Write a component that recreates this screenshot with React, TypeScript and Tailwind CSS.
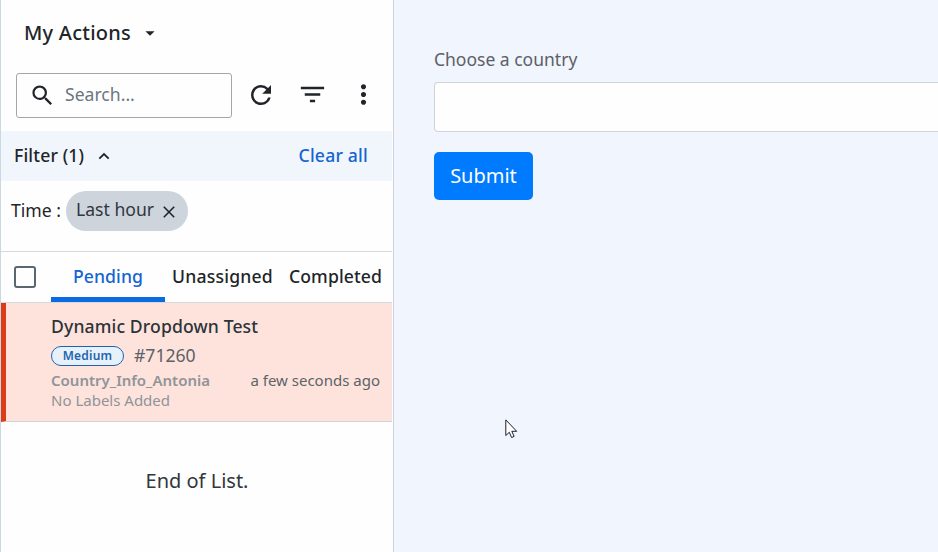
import React from "react";
import { MdSearch, MdRefresh, MdFilterList, MdMoreVert, MdArrowDropDown } from "react-icons/md";

function Sidebar() {
  return (
    <aside className="flex h-full w-[394px] shrink-0 flex-col border-l border-r border-l-[#cbd8e2] border-r-[#cdd3dc] bg-[#fefefe] text-[#212529]">
      <header className="flex h-[66px] items-center pl-[23px]">
        <h1 className="text-[20px] font-medium tracking-[0.25px]">My Actions</h1>
        <MdArrowDropDown className="ml-[8px] size-[22px]" />
      </header>

      <div className="mt-[7px] flex h-[45px] items-center pl-[15px]">
        <label className="flex h-[45px] w-[216px] items-center rounded-[3px] border border-[#a3a7ad] pb-px pl-[12px]">
          <MdSearch className="size-[27px]" />
          <span className="-mt-px ml-[9px] text-[17.6px] text-[#6c757d]">Search...</span>
        </label>
        <MdRefresh className="-mt-[2px] ml-[14px] size-[30px]" />
        <MdFilterList className="-mt-[2px] ml-[21px] size-[31px]" />
        <MdMoreVert className="-mt-[2px] ml-[20px] size-[31px]" />
      </div>

      <div className="mr-px mt-[13px] flex h-[50px] items-center bg-[#f1f5fc] pb-[2px] pl-[13px] pr-[24px] text-[17.6px] font-medium">
        <span className="tracking-[0.15px]">Filter (1)</span>
        <svg className="ml-[14px] mt-[2px] h-[8px] w-[12px]" viewBox="0 0 12 8" fill="none" stroke="#212529" strokeWidth="1.8">
          <path d="M1.3 6.7 6 2l4.700 4.700" />
        </svg>
        <button className="ml-auto tracking-[0.2px] text-[#1464d2]">Clear all</button>
      </div>

      <div className="mr-px flex h-[71px] items-start border-b border-[#d5d8dd] pl-[10px] pt-[10px] text-[17.6px]">
        <span className="leading-[38px]">Time :</span>
        <span className="ml-[5px] flex h-[40px] w-[122px] items-center rounded-full bg-[#ced4dc] pl-[10px] text-[#31363f]">
          <span className="-mt-[4px]">Last hour</span>
          <svg className="ml-[9px] mt-[2px] size-[12px]" viewBox="0 0 12 12" fill="none" stroke="#212529" strokeWidth="1.6">
            <path d="M.8.8 11.200 11.200M11.200.8.8 11.200" />
          </svg>
        </span>
      </div>

      <nav className="mr-px flex h-[51px] items-stretch border-b border-[#d5d8dd] text-[17.6px] font-medium tracking-[0.1px]">
        <span className="ml-[13px] mt-[14px] size-[22px] rounded-[3px] border-2 border-[#5b6770]" />
        <span className="ml-[15px] w-[114px] border-b-[5px] border-[#0a6ae0] text-center leading-[48px] text-[#1464d2]">Pending</span>
        <span className="ml-[7px] w-[100px] whitespace-nowrap leading-[48px] tracking-[0.2px]">Unassigned</span>
        <span className="ml-[17px] whitespace-nowrap leading-[48px]">Completed</span>
      </nav>

      <article className="mr-px flex h-[119px] flex-col border-b border-l-[5px] border-b-[#d5d2d5] border-l-[#dc3a18] bg-[#fee3dd] pl-[45px] pr-[12px] pt-[11px]">
        <h2 className="text-[17.6px] font-medium leading-[24px] tracking-[0.12px] text-[#2d3338]">Dynamic Dropdown Test</h2>
        <div className="mt-[6px] flex h-[24px] items-center">
          <span className="flex h-[20px] w-[73px] items-center justify-center rounded-full border border-[#1c65ae] bg-[#e7f1fc] text-[12px] font-semibold tracking-[0.2px] text-[#1f65ad]">Medium</span>
          <span className="-mt-[2px] ml-[10px] text-[17.6px] text-[#5c6166]">#71260</span>
        </div>
        <div className="mt-[2px] flex items-center justify-between leading-[20px]">
          <span className="text-[15px] font-semibold text-[#8f9498]">Country_Info_Antonia</span>
          <span className="text-[15px] text-[#5c6368]">a few seconds ago</span>
        </div>
        <span className="text-[15px] leading-[20px] text-[#8f9498]">No Labels Added</span>
      </article>

      <p className="mt-[44px] text-center text-[20px] leading-[30px] text-[#33373c]">End of List.</p>
    </aside>
  );
}

function CountryForm() {
  return (
    <main className="flex min-w-0 flex-1 flex-col pl-[40px] pt-[47px]">
      <span className="text-[17.5px] leading-[24px] text-[#5b6066]">Choose a country</span>
      <div className="mt-[11px] h-[50px] rounded-l-[4px] border border-r-0 border-[#ced4da] bg-[#fefefe]" />
      <button className="mt-[20px] h-[48px] w-[99px] rounded-[5px] bg-[#007bff] text-[20px] text-white">Submit</button>
    </main>
  );
}

export default function App() {
  return (
    <div className="relative flex h-[552px] w-[938px] overflow-hidden bg-[#f1f5fd] font-['Noto_Sans',sans-serif]">
      <Sidebar />
      <CountryForm />
      <svg className="absolute left-[505px] top-[419px] h-[20px] w-[13px]" viewBox="0 0 13 20">
        <path d="M.8.900v15.600l3.500-3.200 2.300 5.200 2.500-1.100-2.300-5.100h4.900z" fill="#fff" stroke="#1b2027" strokeWidth="1" />
      </svg>
    </div>
  );
}
